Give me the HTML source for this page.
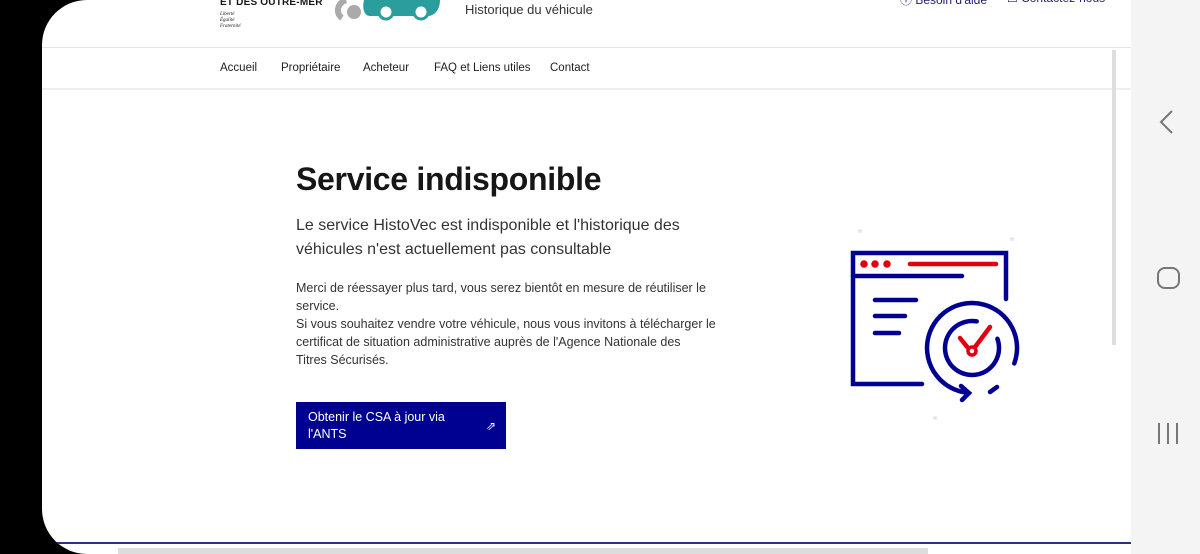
<!DOCTYPE html>
<html><head><meta charset="utf-8"><style>
*{margin:0;padding:0;box-sizing:border-box}
body{width:1200px;height:554px;overflow:hidden;background:#000;font-family:"Liberation Sans",sans-serif;position:relative;color:#161616}
#page{position:absolute;left:42px;top:0;width:1089px;height:554px;background:#fff;border-radius:45px 0 0 45px;overflow:hidden}
#side{position:absolute;left:1131px;top:0;width:69px;height:554px;background:#f4f4f4}
.a{position:absolute;white-space:nowrap}
</style></head><body>
<div id="page">
  <div class="a" style="left:178px;top:-3px;font-size:10px;font-weight:bold;letter-spacing:.2px">ET DES OUTRE-MER</div>
  <div class="a" style="left:178px;top:12px;font-size:5px;font-style:italic;line-height:6px;font-family:'Liberation Serif',serif">Liberté<br>Égalité<br>Fraternité</div>
  <svg class="a" style="left:290px;top:0" width="110" height="25">
    <path d="M14 0 C4 4 4 14 10 18" stroke="#aaa" stroke-width="6" fill="none"/>
    <circle cx="22" cy="12" r="7" fill="#aaa"/>
    <path d="M32 0 H108 C108 10 102 16 96 16 H38 C32 16 30 8 32 0Z" fill="#2a9d9c"/>
    <circle cx="54" cy="12" r="7" fill="#fff" stroke="#2a9d9c" stroke-width="3"/>
    <circle cx="89" cy="12" r="7" fill="#fff" stroke="#2a9d9c" stroke-width="3"/>
  </svg>
  <div class="a" style="left:423px;top:2px;font-size:13px;color:#333">Historique du véhicule</div>
  <div class="a" style="left:858px;top:-9px;font-size:12px;color:#1e1e6e">ⓘ Besoin d'aide</div>
  <div class="a" style="left:965px;top:-9px;font-size:12px;color:#1e1e6e">☐ Contactez-nous</div>
  <div class="a" style="left:0;top:47px;width:1089px;height:1px;background:#e5e5e5"></div>
  <div class="a" style="left:178px;top:62px;font-size:11.5px;color:#222">Accueil</div>
  <div class="a" style="left:239px;top:62px;font-size:11.5px;color:#222">Propriétaire</div>
  <div class="a" style="left:321px;top:62px;font-size:11.5px;color:#222">Acheteur</div>
  <div class="a" style="left:392px;top:62px;font-size:11.5px;color:#222">FAQ et Liens utiles</div>
  <div class="a" style="left:508px;top:62px;font-size:11.5px;color:#222">Contact</div>
  <div class="a" style="left:0;top:88px;width:1089px;height:2px;background:#eee"></div>
  <div class="a" style="left:1070px;top:50px;width:4px;height:295px;background:#ddd"></div>
  <div class="a" style="left:254px;top:161px;font-size:32px;font-weight:bold;letter-spacing:-.3px;color:#161616">Service indisponible</div>
  <div class="a" style="left:254px;top:214px;font-size:16px;line-height:24px;color:#333">Le service HistoVec est indisponible et l'historique des<br>véhicules n'est actuellement pas consultable</div>
  <div class="a" style="left:254px;top:279px;font-size:12.5px;line-height:18px;color:#333">Merci de réessayer plus tard, vous serez bientôt en mesure de réutiliser le<br>service.<br>Si vous souhaitez vendre votre véhicule, nous vous invitons à télécharger le<br>certificat de situation administrative auprès de l'Agence Nationale des<br>Titres Sécurisés.</div>
  <div class="a" style="left:254px;top:402px;width:210px;height:47px;background:#000091;color:#fff;font-size:12.5px;line-height:17px;padding:7px 12px">Obtenir le CSA à jour via<br>l'ANTS<span style="position:absolute;right:10px;top:16px;font-size:12px">⇗</span></div>
  <div class="a" style="left:0;top:542px;width:1089px;height:2px;background:#303080"></div>
  <div class="a" style="left:76px;top:548px;width:810px;height:6px;background:#ddd"></div>
  <svg class="a" style="left:788px;top:220px" width="210" height="210" fill="none" stroke-linecap="round" stroke-width="4.5">
    <circle cx="30" cy="11" r="2" fill="#e5e5f5" stroke="none"/><circle cx="182" cy="19" r="2" fill="#e5e5f5" stroke="none"/><circle cx="105" cy="198" r="2" fill="#e5e5f5" stroke="none"/>
    <path d="M92 164 H23 V33 H176 V79" stroke="#000091"/>
    <path d="M23 56 H132 M45 80 H86 M45 96 H75 M45 113 H69" stroke="#000091"/>
    <circle cx="34" cy="44" r="1.5" stroke="#e1000f" fill="#e1000f"/><circle cx="45" cy="44" r="1.5" stroke="#e1000f" fill="#e1000f"/><circle cx="57" cy="44" r="1.5" stroke="#e1000f" fill="#e1000f"/>
    <path d="M80 44 H166" stroke="#e1000f"/>
    <path d="M184.3 143.4 A45 45 0 1 0 138 172.8" stroke="#000091"/>
    <path d="M160 172 L167 167" stroke="#000091"/>
    <path d="M131 166 L139 173 L132 180" stroke="#000091"/>
    <path d="M167.4 118.8 A27 27 0 1 1 146.7 101.4" stroke="#000091"/>
    <circle cx="142" cy="131" r="4" stroke="#e1000f" stroke-width="3.5"/>
    <path d="M145 127 L160 107 M138 128 L130 118" stroke="#e1000f"/>
  </svg>
</div>
<div id="side">
  <svg class="a" style="left:26px;top:108px" width="20" height="30"><path d="M15 3 L4 14 L15 25" stroke="#777" stroke-width="2" fill="none"/></svg>
  <div class="a" style="left:26px;top:267px;width:23px;height:22px;border:2.5px solid #777;border-radius:8px"></div>
  <svg class="a" style="left:25px;top:422px" width="24" height="24"><path d="M3 1V22M12 1V22M21 1V22" stroke="#777" stroke-width="2"/></svg>
</div>
</body></html>
